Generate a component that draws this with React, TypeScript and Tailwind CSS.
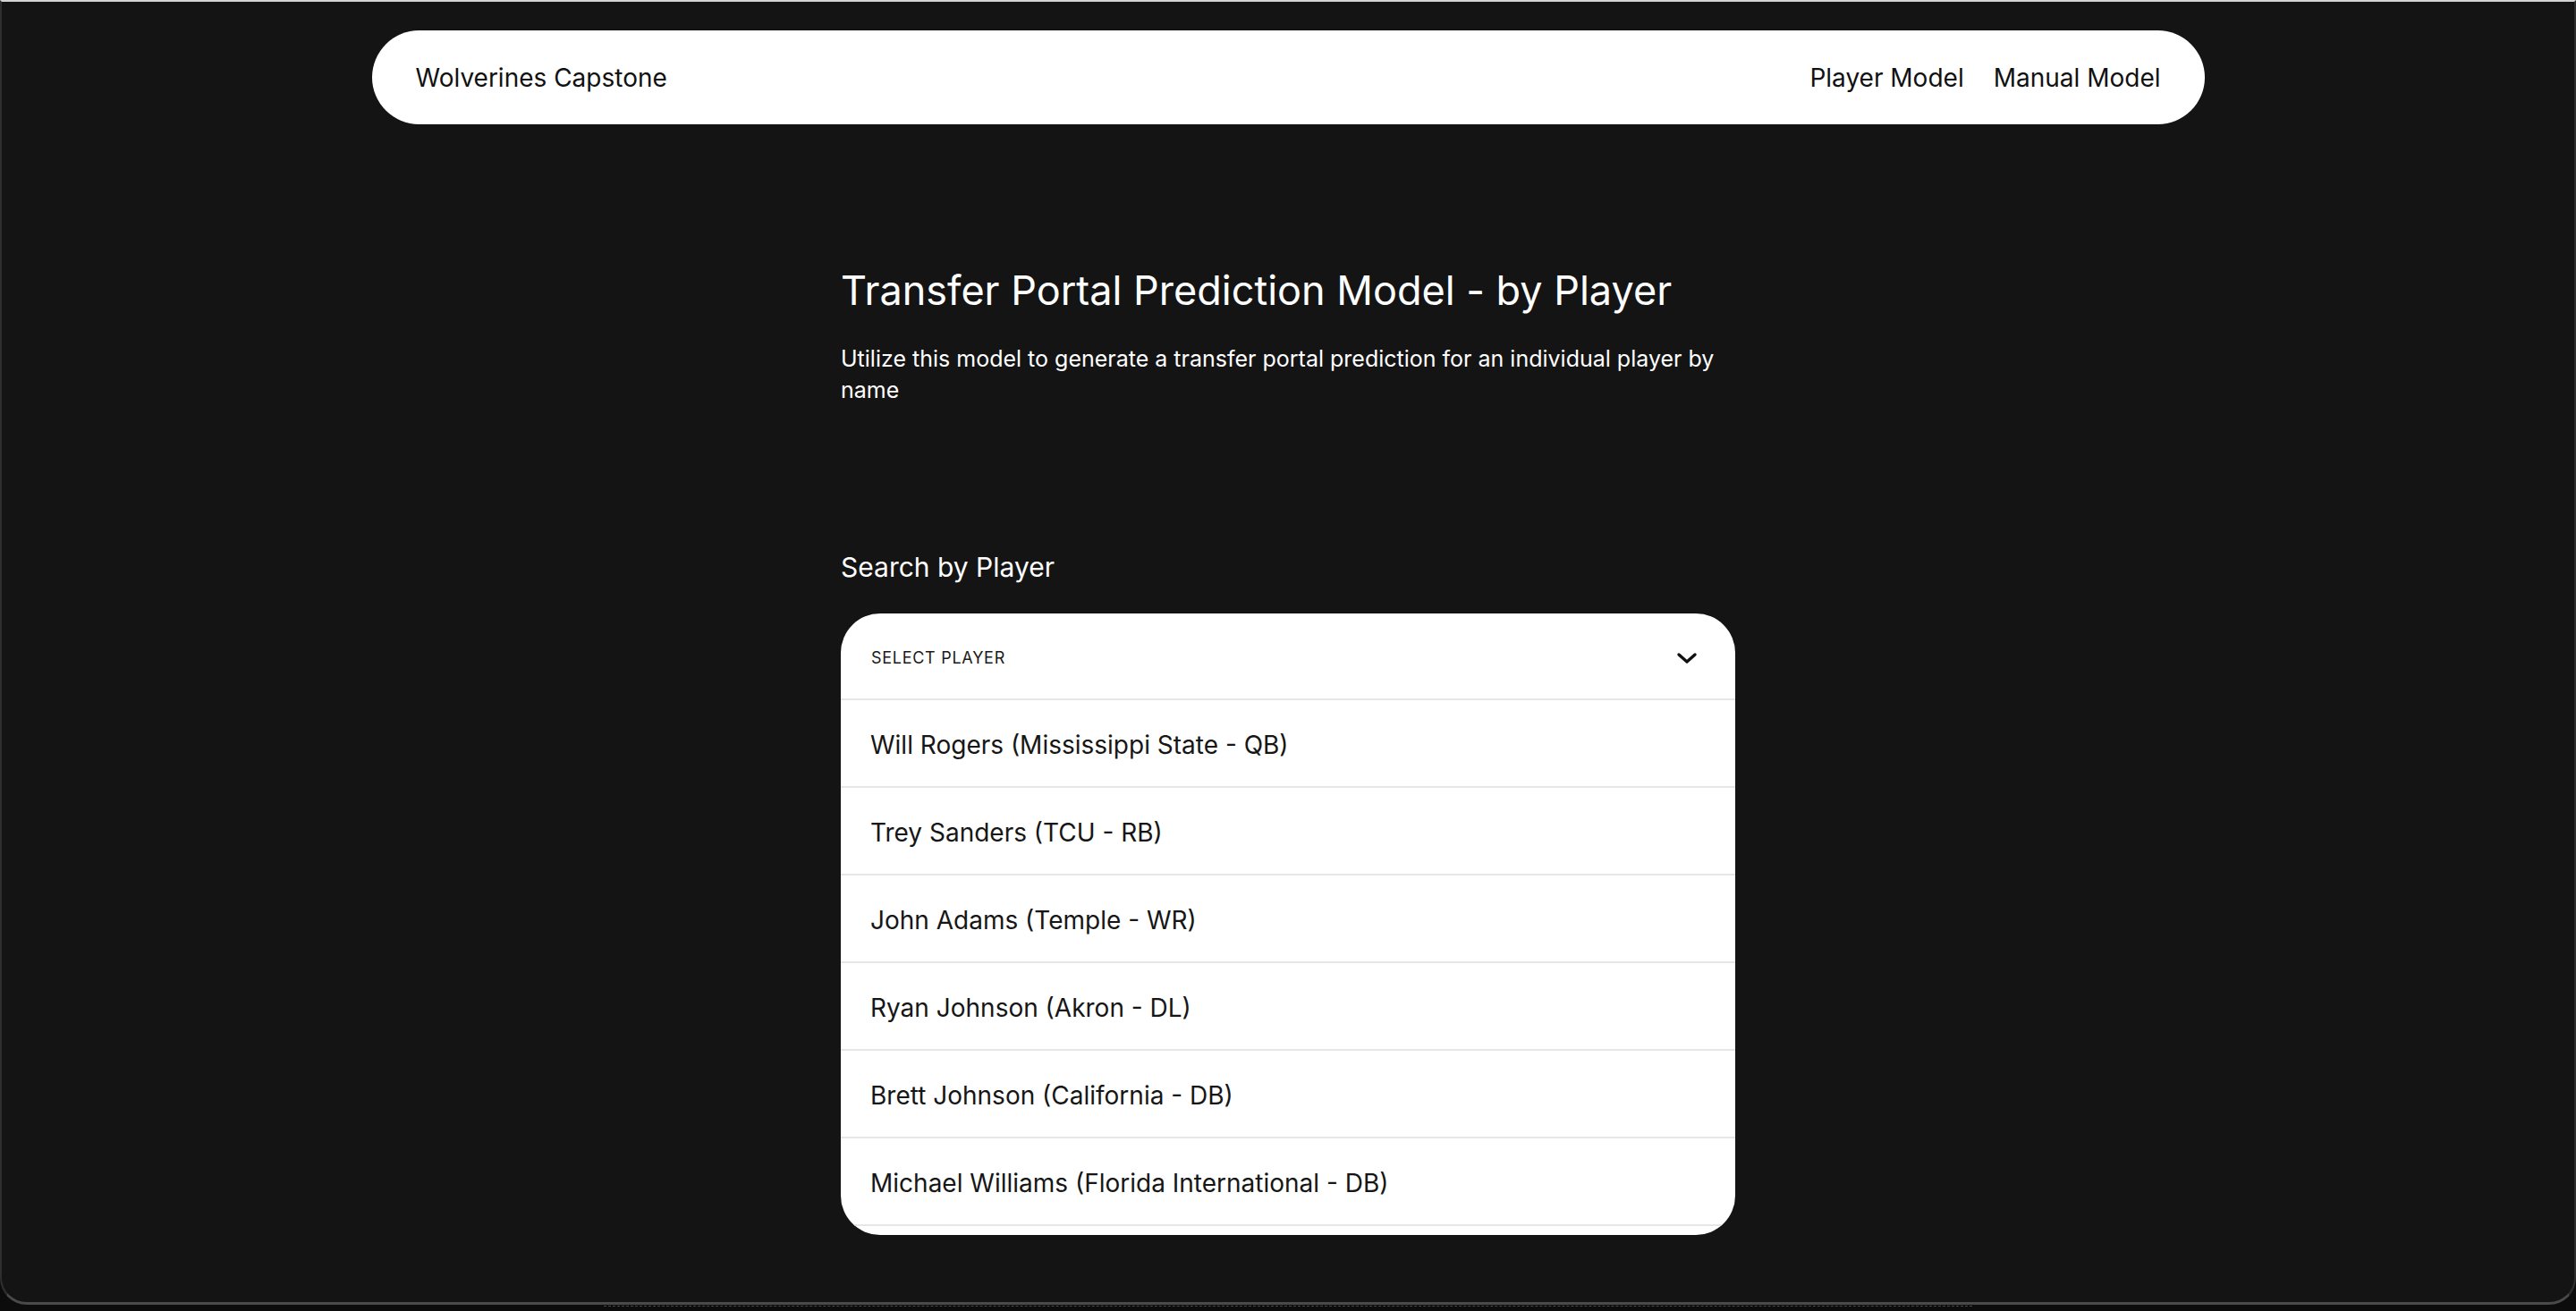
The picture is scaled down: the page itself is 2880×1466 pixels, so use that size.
import * as React from 'react'

const players = [
  'Will Rogers (Mississippi State - QB)',
  'Trey Sanders (TCU - RB)',
  'John Adams (Temple - WR)',
  'Ryan Johnson (Akron - DL)',
  'Brett Johnson (California - DB)',
  'Michael Williams (Florida International - DB)',
  'Jalen Smith (Oregon - LB)',
]

function Chevron() {
  return (
    <svg width="24" height="14" viewBox="0 0 24 14" fill="none">
      <polyline
        points="3,3 12,11 21,3"
        stroke="#111111"
        strokeWidth="3.4"
        strokeLinecap="round"
        strokeLinejoin="round"
      />
    </svg>
  )
}

function NavBar() {
  return (
    <nav className="mx-auto flex h-[105px] w-[2049px] items-center justify-between rounded-full bg-white px-[49px] text-[28px] text-[#111111]">
      <span>Wolverines Capstone</span>
      <div className="flex gap-[33px]">
        <a href="#">Player Model</a>
        <a href="#">Manual Model</a>
      </div>
    </nav>
  )
}

function PlayerSelect() {
  return (
    <div className="h-[695px] w-[1000px] overflow-hidden rounded-[44px] bg-white">
      <div className="flex h-[97px] items-center justify-between border-b-2 border-[#e6e6e6] pl-[34px] pr-[42px] pt-[4px]">
        <span className="text-[18px] tracking-[0.04em] text-[#1a1a1a]">SELECT PLAYER</span>
        <Chevron />
      </div>
      {players.map((name) => (
        <div
          key={name}
          className="flex h-[98px] items-center border-b-2 border-[#e6e6e6] pl-[33px] pt-[3px] text-[28px] text-[#161616]"
        >
          {name}
        </div>
      ))}
    </div>
  )
}

export default function App() {
  return (
    <div className="h-[1466px] w-full overflow-hidden bg-[#0c0c0c] font-['Inter',sans-serif]">
      <div className="h-[1459px] rounded-b-[30px] border-x-2 border-b-[3px] border-t-2 border-x-[#2e2e2e] border-b-[#4a4a4a] border-t-[#d4d4d4] bg-[#141414] pt-[32px]">
        <NavBar />
        <main className="mx-auto w-[1000px] text-white">
          <h1 className="mt-[159px] text-[45px] leading-[53px]">
            Transfer Portal Prediction Model - by Player
          </h1>
          <p className="mt-[33px] text-[25px] leading-[35px]">
            Utilize this model to generate a transfer portal prediction for an individual player by name
          </p>
          <h2 className="mt-[164px] text-[30px] leading-[32px]">Search by Player</h2>
          <div className="mt-[36px]">
            <PlayerSelect />
          </div>
        </main>
      </div>
      <div className="mx-auto mt-[1px] h-px w-[1530px] border-t border-dashed border-[#4a4a4a]" />
    </div>
  )
}
